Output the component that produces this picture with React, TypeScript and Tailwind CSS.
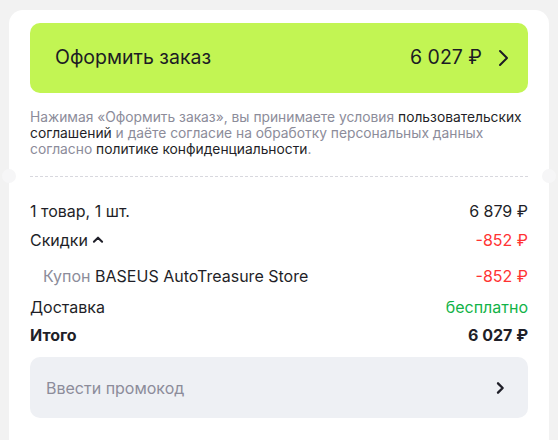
const rows = [
  { label: "1 товар, 1 шт.", value: "6 879 ₽" },
];

const Chevron = ({ className }: { className?: string }) => (
  <svg viewBox="0 0 24 24" className={className} fill="none" stroke="currentColor" strokeLinecap="round" strokeLinejoin="round">
    <path d="M9 5l7 7-7 7" />
  </svg>
);

const App = () => {
  return (
    <div
      className="w-[558px] h-[440px] overflow-hidden bg-[#f2f2f2] pt-[10px] px-[9px]"
      style={{ fontFamily: "Inter, 'Noto Sans', sans-serif" }}
    >
      <div className="relative bg-white rounded-[14px] h-[450px] px-[21px] pt-[13px] text-[#1f1f28]">
        {/* order button */}
        <button className="w-full h-[70px] rounded-[10px] bg-[#c2f553] flex items-center pl-[25px] pr-[13px] text-[19.5px] text-[#1c1c24]">
          <span>Оформить заказ</span>
          <span className="ml-auto">6 027 ₽</span>
          <Chevron className="w-[24px] h-[24px] ml-[9px] stroke-[2]" />
        </button>

        <p className="mt-[16px] text-[13.8px] leading-[16px] text-[#8c8c9a]">
          Нажимая «Оформить заказ», вы принимаете условия{" "}
          <span className="text-[#1f1f28]">пользовательских соглашений</span> и даёте согласие на обработку персональных
          данных согласно <span className="text-[#1f1f28]">политике конфиденциальности</span>.
        </p>

        {/* tear line */}
        <div className="relative mt-[19px]">
          <div className="border-t border-dashed border-[#d8d8de]" />
          <div className="absolute -left-[28px] -top-[7px] w-[14px] h-[14px] rounded-full bg-[#f6f6f7]" />
          <div className="absolute -right-[28px] -top-[7px] w-[14px] h-[14px] rounded-full bg-[#f6f6f7]" />
        </div>

        <div className="mt-[22px] text-[16px] leading-[24px]">
          {rows.map((r, i) => (
            <div key={i} className="flex justify-between">
              <span>{r.label}</span>
              <span>{r.value}</span>
            </div>
          ))}
          <div className="flex justify-between mt-[5px]">
            <span className="flex items-center">
              Скидки
              <svg viewBox="0 0 24 24" className="w-[14px] h-[14px] ml-[3px]" fill="none" stroke="currentColor" strokeWidth="3.5" strokeLinecap="round" strokeLinejoin="round">
                <path d="M5 15l7-7 7 7" />
              </svg>
            </span>
            <span className="text-[#ff3333]">-852 ₽</span>
          </div>
          <div className="flex justify-between mt-[12px] pl-[13px]">
            <span>
              <span className="text-[#8c8c9a]">Купон</span> BASEUS AutoTreasure Store
            </span>
            <span className="text-[#ff3333]">-852 ₽</span>
          </div>
          <div className="flex justify-between mt-[7px]">
            <span>Доставка</span>
            <span className="text-[#12b347]">бесплатно</span>
          </div>
          <div className="flex justify-between mt-[4px] font-bold">
            <span>Итого</span>
            <span>6 027 ₽</span>
          </div>
        </div>

        {/* promo */}
        <div className="mt-[10px] h-[61px] rounded-[10px] bg-[#eef0f4] flex items-center pl-[16px] pr-[20px]">
          <span className="text-[16px] text-[#8c8c9a]">Ввести промокод</span>
          <Chevron className="w-[16px] h-[16px] ml-auto stroke-[3.5] text-[#1f1f28]" />
        </div>
      </div>
    </div>
  );
};

export default App;
